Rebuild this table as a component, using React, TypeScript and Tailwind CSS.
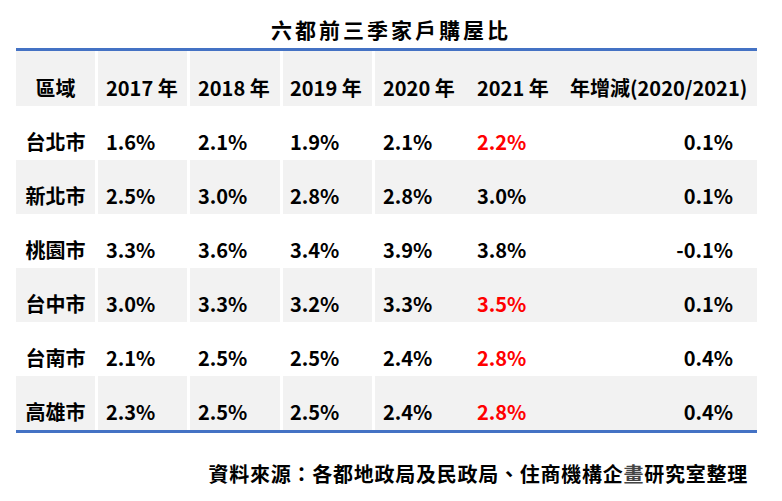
const FONT = "font-['Noto_Sans_CJK_TC','Noto_Sans',sans-serif]";

type Row = {
  city: string;
  values: string[];
  red: boolean;
  diff: string;
};

const ROWS: Row[] = [
  { city: "台北市", values: ["1.6%", "2.1%", "1.9%", "2.1%", "2.2%"], red: true, diff: "0.1%" },
  { city: "新北市", values: ["2.5%", "3.0%", "2.8%", "2.8%", "3.0%"], red: false, diff: "0.1%" },
  { city: "桃園市", values: ["3.3%", "3.6%", "3.4%", "3.9%", "3.8%"], red: false, diff: "-0.1%" },
  { city: "台中市", values: ["3.0%", "3.3%", "3.2%", "3.3%", "3.5%"], red: true, diff: "0.1%" },
  { city: "台南市", values: ["2.1%", "2.5%", "2.5%", "2.4%", "2.8%"], red: true, diff: "0.4%" },
  { city: "高雄市", values: ["2.3%", "2.5%", "2.5%", "2.4%", "2.8%"], red: true, diff: "0.4%" },
];

// column shells: first four boundaries have a white 3px gap
const COLS = [
  "w-[79px] justify-center",
  "w-[92px] border-l-[3px] border-white pl-[8px]",
  "w-[93px] border-l-[3px] border-white pl-[8px]",
  "w-[92px] border-l-[3px] border-white pl-[7px]",
  "w-[97px] border-l-[3px] border-white pl-[8px]",
  "w-[93px] pl-[8px]",
];

function Cell({ col, children, className = "" }: { col: number; children: React.ReactNode; className?: string }) {
  return (
    <div className={`flex items-end pb-[6px] whitespace-nowrap ${COLS[col]} ${className}`}>
      {children}
    </div>
  );
}

export default function App() {
  return (
    <div className={`w-[782px] h-[501px] bg-white text-black font-bold ${FONT}`}>
      {/* Title */}
      <div className="pt-[15px] h-[48px] text-center text-[21px] leading-[28px] tracking-[3px]">
        六都前三季家戶購屋比
      </div>

      {/* Table */}
      <div className="mx-[16px] w-[741px] border-y-[3px] border-[#4472c4] text-[20px] leading-[24px]">
        <div className="flex h-[55px] bg-[#f2f2f2]">
          <Cell col={0}>區域</Cell>
          <Cell col={1}>2017 年</Cell>
          <Cell col={2}>2018 年</Cell>
          <Cell col={3}>2019 年</Cell>
          <Cell col={4}>2020 年</Cell>
          <Cell col={5}>2021 年</Cell>
          <div className="flex flex-1 items-end pb-[6px] pl-[8px] whitespace-nowrap">
            年增減(2020/2021)
          </div>
        </div>

        {ROWS.map((row, i) => (
          <div key={row.city} className={`flex h-[54px] ${i % 2 === 1 ? "bg-[#f2f2f2]" : "bg-white"}`}>
            <Cell col={0}>{row.city}</Cell>
            {row.values.map((v, j) => (
              <Cell key={j} col={j + 1} className={j === 4 && row.red ? "text-[#ff0000]" : ""}>
                {v}
              </Cell>
            ))}
            <div className="flex flex-1 items-end justify-end pb-[6px] pr-[24px]">
              {row.diff}
            </div>
          </div>
        ))}
      </div>

      {/* Source */}
      <div className="pt-[28px] pr-[34px] text-right text-[20px] leading-[26px] tracking-[0.75px]">
        資料來源：各都地政局及民政局、住商機構企<span className="text-[#444]">畫</span>研究室整理
      </div>
    </div>
  );
}
